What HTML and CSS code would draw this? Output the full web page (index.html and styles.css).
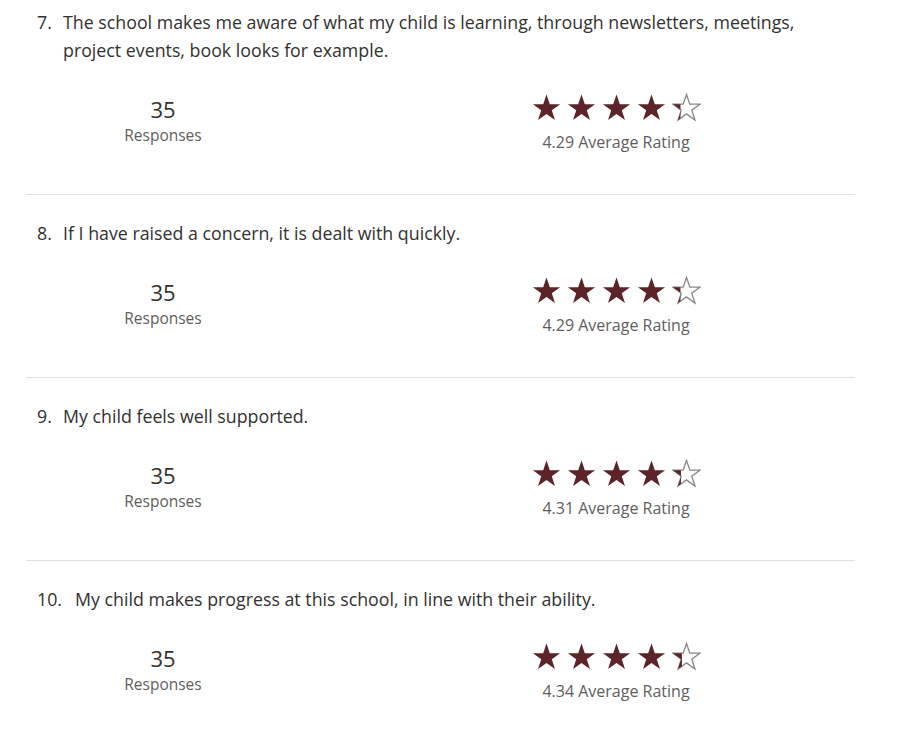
FILE: index.html
```html
<!DOCTYPE html>
<html>
<head>
<meta charset="utf-8">
<link rel="stylesheet" href="styles.css">
</head>
<body>
<svg width="0" height="0" class="defs">
  <defs>
    <symbol id="star" viewBox="0 0 24 24"><path d="M12 1.6l2.75 8.05h8.5l-6.88 5 2.63 8.1L12 17.73l-7 5.02 2.63-8.1-6.88-5h8.5z"/></symbol>
    <clipPath id="c29"><rect x="0" y="0" width="7" height="24"/></clipPath>
    <clipPath id="c31"><rect x="0" y="0" width="7.4" height="24"/></clipPath>
    <clipPath id="c34"><rect x="0" y="0" width="8.2" height="24"/></clipPath>
  </defs>
</svg>
<div class="list">
  <section class="item first">
    <div class="q"><span class="num">7.</span><span class="qt">The school makes me aware of what my child is learning, through newsletters, meetings, project events, book looks for example.</span></div>
    <div class="stats">
      <div class="resp"><div class="count">35</div><div class="label">Responses</div></div>
      <div class="rating">
        <div class="stars">
          <svg class="s"><use href="#star"/></svg><svg class="s"><use href="#star"/></svg><svg class="s"><use href="#star"/></svg><svg class="s"><use href="#star"/></svg>
          <svg class="s part" viewBox="0 0 24 24"><path class="o" d="M12 1.6l2.75 8.05h8.5l-6.88 5 2.63 8.1L12 17.73l-7 5.02 2.63-8.1-6.88-5h8.5z"/><path class="f" clip-path="url(#c29)" d="M12 1.6l2.75 8.05h8.5l-6.88 5 2.63 8.1L12 17.73l-7 5.02 2.63-8.1-6.88-5h8.5z"/></svg>
        </div>
        <div class="avg">4.29 Average Rating</div>
      </div>
    </div>
  </section>
  <section class="item">
    <div class="q"><span class="num">8.</span><span class="qt">If I have raised a concern, it is dealt with quickly.</span></div>
    <div class="stats">
      <div class="resp"><div class="count">35</div><div class="label">Responses</div></div>
      <div class="rating">
        <div class="stars">
          <svg class="s"><use href="#star"/></svg><svg class="s"><use href="#star"/></svg><svg class="s"><use href="#star"/></svg><svg class="s"><use href="#star"/></svg>
          <svg class="s part" viewBox="0 0 24 24"><path class="o" d="M12 1.6l2.75 8.05h8.5l-6.88 5 2.63 8.1L12 17.73l-7 5.02 2.63-8.1-6.88-5h8.5z"/><path class="f" clip-path="url(#c29)" d="M12 1.6l2.75 8.05h8.5l-6.88 5 2.63 8.1L12 17.73l-7 5.02 2.63-8.1-6.88-5h8.5z"/></svg>
        </div>
        <div class="avg">4.29 Average Rating</div>
      </div>
    </div>
  </section>
  <section class="item">
    <div class="q"><span class="num">9.</span><span class="qt">My child feels well supported.</span></div>
    <div class="stats">
      <div class="resp"><div class="count">35</div><div class="label">Responses</div></div>
      <div class="rating">
        <div class="stars">
          <svg class="s"><use href="#star"/></svg><svg class="s"><use href="#star"/></svg><svg class="s"><use href="#star"/></svg><svg class="s"><use href="#star"/></svg>
          <svg class="s part" viewBox="0 0 24 24"><path class="o" d="M12 1.6l2.75 8.05h8.5l-6.88 5 2.63 8.1L12 17.73l-7 5.02 2.63-8.1-6.88-5h8.5z"/><path class="f" clip-path="url(#c31)" d="M12 1.6l2.75 8.05h8.5l-6.88 5 2.63 8.1L12 17.73l-7 5.02 2.63-8.1-6.88-5h8.5z"/></svg>
        </div>
        <div class="avg">4.31 Average Rating</div>
      </div>
    </div>
  </section>
  <section class="item last">
    <div class="q"><span class="num wide">10.</span><span class="qt">My child makes progress at this school, in line with their ability.</span></div>
    <div class="stats">
      <div class="resp"><div class="count">35</div><div class="label">Responses</div></div>
      <div class="rating">
        <div class="stars">
          <svg class="s"><use href="#star"/></svg><svg class="s"><use href="#star"/></svg><svg class="s"><use href="#star"/></svg><svg class="s"><use href="#star"/></svg>
          <svg class="s part" viewBox="0 0 24 24"><path class="o" d="M12 1.6l2.75 8.05h8.5l-6.88 5 2.63 8.1L12 17.73l-7 5.02 2.63-8.1-6.88-5h8.5z"/><path class="f" clip-path="url(#c34)" d="M12 1.6l2.75 8.05h8.5l-6.88 5 2.63 8.1L12 17.73l-7 5.02 2.63-8.1-6.88-5h8.5z"/></svg>
        </div>
        <div class="avg">4.34 Average Rating</div>
      </div>
    </div>
  </section>
</div>
</body>
</html>
```

FILE: styles.css
```css
html, body {
  margin: 0;
  padding: 0;
  background: #ffffff;
}
body {
  font-family: "Open Sans", "Noto Sans", "Liberation Sans", sans-serif;
  color: #323130;
}
.defs {
  position: absolute;
  width: 0;
  height: 0;
}
.list {
  width: 829px;
  margin-left: 26px;
  padding-top: 8px;
}
.item {
  border-bottom: 1px solid #e1dfdd;
  padding: 24px 0 41px 0;
}
.item.first {
  padding-top: 0;
}
.item.last {
  border-bottom: none;
}
.q {
  display: flex;
  font-size: 17.8px;
  line-height: 28px;
  color: #323130;
  padding-left: 11px;
}
.num {
  width: 26px;
  flex: none;
}
.num.wide {
  width: 38px;
}
.qt {
  flex: 1;
  max-width: 760px;
}
.stats {
  display: flex;
  margin-top: 29px;
}
.resp {
  width: 274px;
  text-align: center;
  padding-top: 1px;
}
.count {
  font-size: 22px;
  line-height: 30px;
  color: #323130;
}
.label {
  font-size: 15.5px;
  line-height: 22px;
  color: #605e5c;
}
.rating {
  margin-left: 226px;
  margin-top: -1px;
  width: 180px;
  display: flex;
  flex-direction: column;
  align-items: center;
}
.stars {
  display: flex;
  gap: 6px;
  height: 30px;
}
.s {
  width: 29px;
  height: 30px;
  fill: #5c2328;
}
.s.part .o {
  fill: #ffffff;
  stroke: #8a8886;
  stroke-width: 1.1;
}
.s.part .f {
  fill: #5c2328;
}
.avg {
  margin-top: 9px;
  font-size: 16px;
  line-height: 22px;
  color: #605e5c;
}
```
